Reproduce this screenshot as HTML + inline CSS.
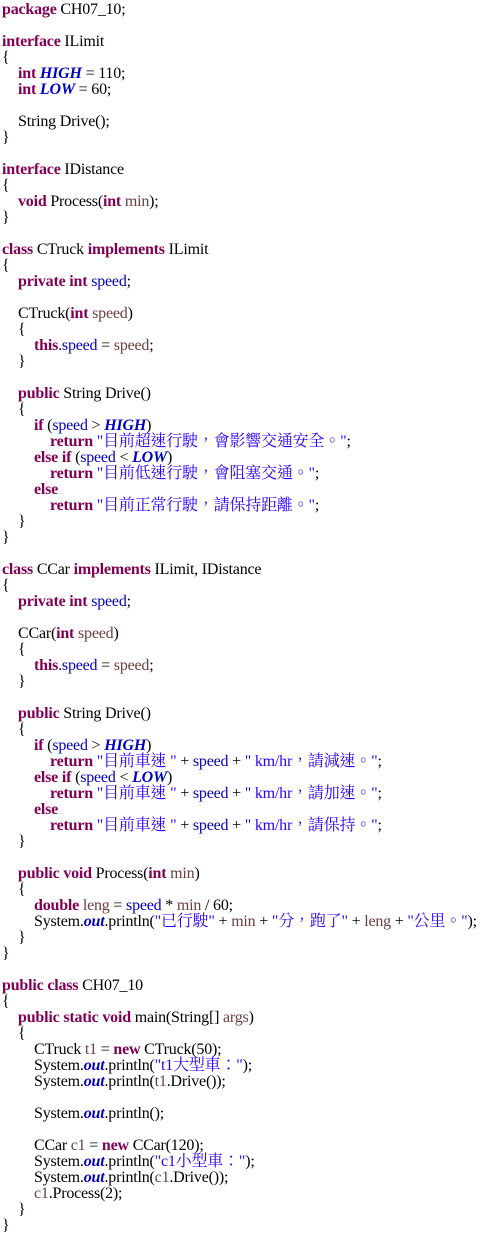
<!DOCTYPE html>
<html><head><meta charset="utf-8"><style>
body{margin:0;background:#fff;width:487px;height:1234px;overflow:hidden}
#c{padding-top:2px;padding-left:2px;font-family:"Liberation Serif","Noto Serif CJK TC","Noto Serif CJK SC",serif;font-size:16px;line-height:16px;color:#000;letter-spacing:-0.2px}
#c div{height:16px;white-space:pre}
.k{color:#7f0055;font-weight:bold}
.f{color:#0000c0}
.s{color:#0000c0;font-weight:bold;font-style:italic}
.t{color:#2a00ff}
.v{color:#6a3e3e}
.i1{padding-left:16px}.i2{padding-left:32px}.i3{padding-left:48px}
</style></head><body><div id="c"><div><span class="k">package</span> CH07_10;</div><div></div><div><span class="k">interface</span> ILimit</div><div>{</div><div class="i1"><span class="k">int</span> <span class="s">HIGH</span> = 110;</div><div class="i1"><span class="k">int</span> <span class="s">LOW</span> = 60;</div><div></div><div class="i1">String Drive();</div><div>}</div><div></div><div><span class="k">interface</span> IDistance</div><div>{</div><div class="i1"><span class="k">void</span> Process(<span class="k">int</span> <span class="v">min</span>);</div><div>}</div><div></div><div><span class="k">class</span> CTruck <span class="k">implements</span> ILimit</div><div>{</div><div class="i1"><span class="k">private</span> <span class="k">int</span> <span class="f">speed</span>;</div><div></div><div class="i1">CTruck(<span class="k">int</span> <span class="v">speed</span>)</div><div class="i1">{</div><div class="i2"><span class="k">this</span>.<span class="f">speed</span> = <span class="v">speed</span>;</div><div class="i1">}</div><div></div><div class="i1"><span class="k">public</span> String Drive()</div><div class="i1">{</div><div class="i2"><span class="k">if</span> (<span class="f">speed</span> &gt; <span class="s">HIGH</span>)</div><div class="i3"><span class="k">return</span> <span class="t">"目前超速行駛，會影響交通安全。"</span>;</div><div class="i2"><span class="k">else</span> <span class="k">if</span> (<span class="f">speed</span> &lt; <span class="s">LOW</span>)</div><div class="i3"><span class="k">return</span> <span class="t">"目前低速行駛，會阻塞交通。"</span>;</div><div class="i2"><span class="k">else</span></div><div class="i3"><span class="k">return</span> <span class="t">"目前正常行駛，請保持距離。"</span>;</div><div class="i1">}</div><div>}</div><div></div><div><span class="k">class</span> CCar <span class="k">implements</span> ILimit, IDistance</div><div>{</div><div class="i1"><span class="k">private</span> <span class="k">int</span> <span class="f">speed</span>;</div><div></div><div class="i1">CCar(<span class="k">int</span> <span class="v">speed</span>)</div><div class="i1">{</div><div class="i2"><span class="k">this</span>.<span class="f">speed</span> = <span class="v">speed</span>;</div><div class="i1">}</div><div></div><div class="i1"><span class="k">public</span> String Drive()</div><div class="i1">{</div><div class="i2"><span class="k">if</span> (<span class="f">speed</span> &gt; <span class="s">HIGH</span>)</div><div class="i3"><span class="k">return</span> <span class="t">"目前車速 "</span> + <span class="f">speed</span> + <span class="t">" km/hr，請減速。"</span>;</div><div class="i2"><span class="k">else</span> <span class="k">if</span> (<span class="f">speed</span> &lt; <span class="s">LOW</span>)</div><div class="i3"><span class="k">return</span> <span class="t">"目前車速 "</span> + <span class="f">speed</span> + <span class="t">" km/hr，請加速。"</span>;</div><div class="i2"><span class="k">else</span></div><div class="i3"><span class="k">return</span> <span class="t">"目前車速 "</span> + <span class="f">speed</span> + <span class="t">" km/hr，請保持。"</span>;</div><div class="i1">}</div><div></div><div class="i1"><span class="k">public</span> <span class="k">void</span> Process(<span class="k">int</span> <span class="v">min</span>)</div><div class="i1">{</div><div class="i2"><span class="k">double</span> <span class="v">leng</span> = <span class="f">speed</span> * <span class="v">min</span> / 60;</div><div class="i2">System.<span class="s">out</span>.println(<span class="t">"已行駛"</span> + <span class="v">min</span> + <span class="t">"分，跑了"</span> + <span class="v">leng</span> + <span class="t">"公里。"</span>);</div><div class="i1">}</div><div>}</div><div></div><div><span class="k">public</span> <span class="k">class</span> CH07_10</div><div>{</div><div class="i1"><span class="k">public</span> <span class="k">static</span> <span class="k">void</span> main(String[] <span class="v">args</span>)</div><div class="i1">{</div><div class="i2">CTruck <span class="v">t1</span> = <span class="k">new</span> CTruck(50);</div><div class="i2">System.<span class="s">out</span>.println(<span class="t">"t1大型車："</span>);</div><div class="i2">System.<span class="s">out</span>.println(<span class="v">t1</span>.Drive());</div><div></div><div class="i2">System.<span class="s">out</span>.println();</div><div></div><div class="i2">CCar <span class="v">c1</span> = <span class="k">new</span> CCar(120);</div><div class="i2">System.<span class="s">out</span>.println(<span class="t">"c1小型車："</span>);</div><div class="i2">System.<span class="s">out</span>.println(<span class="v">c1</span>.Drive());</div><div class="i2"><span class="v">c1</span>.Process(2);</div><div class="i1">}</div><div>}</div></div></body></html>
